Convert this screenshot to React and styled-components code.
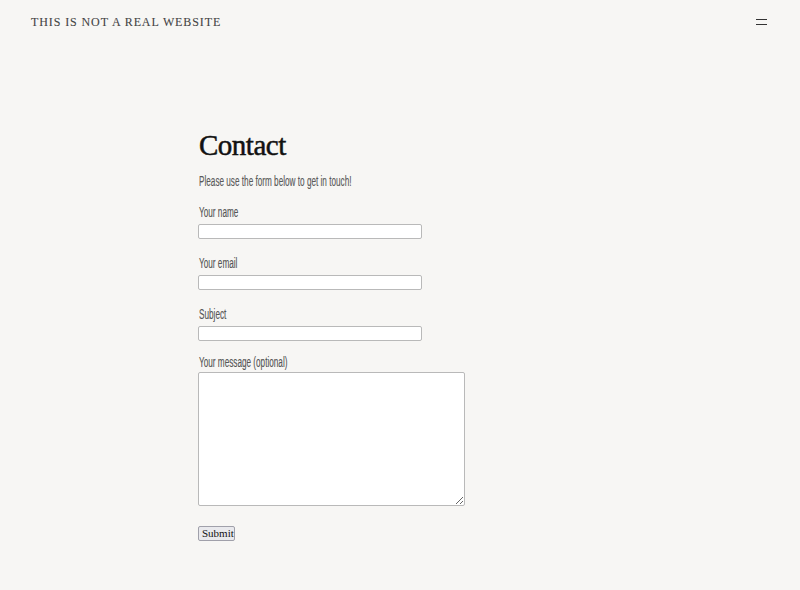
import React from "react";
import styled, { createGlobalStyle } from "styled-components";

const Global = createGlobalStyle`
  html, body { margin: 0; padding: 0; background: #f7f6f4; }
  body { font-family: "Liberation Sans", Arial, sans-serif; }
  * { box-sizing: border-box; }
`;

const Page = styled.div`
  min-height: 590px;
  background: #f7f6f4;
`;

const Header = styled.header`
  display: flex;
  align-items: flex-start;
  justify-content: space-between;
  padding: 15px 33px 0 31px;
  height: 44px;
`;

const SiteTitle = styled.div`
  font-family: "Liberation Serif", "DejaVu Serif", serif;
  font-size: 12px;
  line-height: 14px;
  letter-spacing: 0.9px;
  color: #444;
  text-transform: uppercase;
  -webkit-text-stroke: 0.1px #444;
`;

const Burger = styled.button`
  display: flex;
  flex-direction: column;
  gap: 4px;
  width: 11px;
  margin-top: 4px;
  padding: 0;
  border: 0;
  background: none;
  span { display: block; height: 1px; background: #333; }
`;

const Main = styled.main`
  padding: 84px 0 0 199px;
`;

const Heading = styled.h1`
  margin: 0;
  font-family: "Liberation Serif", "DejaVu Serif", serif;
  font-weight: 400;
  font-size: 29px;
  line-height: 34px;
  letter-spacing: -0.5px;
  color: #111;
  -webkit-text-stroke: 0.5px #111;
`;

const Condensed = styled.span`
  display: block;
  white-space: nowrap;
  font-size: 14px;
  line-height: 14px;
  color: ${(p) => p.$color || "#555"};
  transform: scaleX(0.585);
  transform-origin: 0 50%;
  -webkit-text-stroke: 0.15px currentColor;
`;

const Intro = styled.div`
  margin-top: 12px;
`;

const Form = styled.form`
  display: flex;
  flex-direction: column;
  margin-top: 17px;
`;

const Field = styled.label`
  display: flex;
  flex-direction: column;
  gap: 5px;
  margin-bottom: ${(p) => p.$after || 17}px;
`;

const Input = styled.input`
  width: 224px;
  height: 15px;
  border: 1px solid #b9b9b9;
  border-radius: 2px;
  background: #fff;
  padding: 0 3px;
  margin-left: -1px;
`;

const TextArea = styled.textarea`
  width: 267px;
  height: 134px;
  border: 1px solid #b9b9b9;
  border-radius: 2px;
  background: #fff;
  margin: -2px 0 0 -1px;
  display: block;
`;

const Submit = styled.button`
  align-self: flex-start;
  margin: 3px 0 0 -1px;
  font-family: "Liberation Serif", serif;
  font-size: 11px;
  padding: 0 3px;
  width: 37px;
  height: 15px;
  line-height: 13px;
  color: #111;
  background: #e9e9ed;
  border: 1px solid #a0a0aa;
  border-radius: 2px;
`;

export default function App() {
  return (
    <Page>
      <Global />
      <Header>
        <SiteTitle>This is not a real website</SiteTitle>
        <Burger aria-label="Menu">
          <span />
          <span />
        </Burger>
      </Header>
      <Main>
        <Heading>Contact</Heading>
        <Intro>
          <Condensed $color="#5a5a5a">Please use the form below to get in touch!</Condensed>
        </Intro>
        <Form onSubmit={(e) => e.preventDefault()}>
          <Field>
            <Condensed>Your name</Condensed>
            <Input type="text" />
          </Field>
          <Field>
            <Condensed>Your email</Condensed>
            <Input type="email" />
          </Field>
          <Field $after={14}>
            <Condensed>Subject</Condensed>
            <Input type="text" />
          </Field>
          <Field>
            <Condensed>Your message (optional)</Condensed>
            <TextArea />
          </Field>
          <Submit type="submit">Submit</Submit>
        </Form>
      </Main>
    </Page>
  );
}
